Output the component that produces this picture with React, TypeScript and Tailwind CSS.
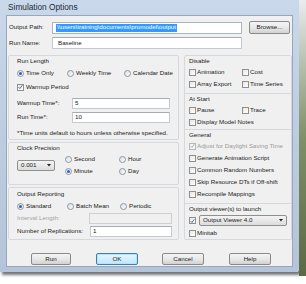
import React from 'react';

const Check = ({ checked, disabled }: { checked?: boolean; disabled?: boolean }) => (
  <span
    className={`w-[7px] h-[7px] shrink-0 border flex items-center justify-center ${
      disabled ? 'border-[#b8b8b8] bg-[#f4f4f4]' : 'border-[#8e8f8f] bg-gradient-to-br from-[#e6e6e6] to-[#ffffff]'
    }`}
  >
    {checked && (
      <svg width="6" height="6" viewBox="0 0 6 6">
        <path d="M0.8 3.2 L2.3 4.8 L5.2 0.9" fill="none" stroke={disabled ? '#a0a0a0' : '#3b5478'} strokeWidth="1" />
      </svg>
    )}
  </span>
);

const CheckItem = ({ label, checked, disabled, className = '' }: { label: string; checked?: boolean; disabled?: boolean; className?: string }) => (
  <div className={`flex items-center gap-[1px] ${className}`}>
    <Check checked={checked} disabled={disabled} />
    <span className={disabled ? 'text-[#9a9a9a]' : ''}>{label}</span>
  </div>
);

const Radio = ({ label, checked, className = '' }: { label: string; checked?: boolean; className?: string }) => (
  <div className={`flex items-center gap-[2px] ${className}`}>
    <span className="w-[7px] h-[7px] shrink-0 rounded-full border border-[#8c97a6] bg-gradient-to-br from-[#dcdfe3] to-[#fbfbfb] flex items-center justify-center">
      {checked && <span className="w-[3px] h-[3px] rounded-full bg-[#2b63b6]" />}
    </span>
    <span>{label}</span>
  </div>
);

const Input = ({ value, className = '', disabled }: { value?: string; className?: string; disabled?: boolean }) => (
  <div
    className={`h-[11px] border flex items-center px-[2px] ${
      disabled ? 'bg-[#f0f0f0] border-[#cfcfcf]' : 'bg-white border-[#c5c9d0] border-t-[#a7abb3]'
    } ${className}`}
  >
    {value}
  </div>
);

const Button = ({ label, focus, className = '' }: { label: string; focus?: boolean; className?: string }) => (
  <div
    className={`h-[12px] rounded-[2px] border flex items-center justify-center ${
      focus
        ? 'border-[#3c7fb1] bg-gradient-to-b from-[#eaf6fd] to-[#bee6fd] shadow-[inset_0_0_0_1px_#b7e2fb]'
        : 'border-[#8a8a8a] bg-gradient-to-b from-[#f4f4f4] via-[#e8e8e8] to-[#d2d2d2]'
    } ${className}`}
  >
    {label}
  </div>
);

const Dropdown = ({ value, className = '' }: { value: string; className?: string }) => (
  <div className={`border border-[#8e8f8f] rounded-[2px] bg-gradient-to-b from-[#f4f4f4] to-[#dcdcdc] flex items-center justify-between pl-[3px] pr-[3px] ${className}`}>
    <span>{value}</span>
    <svg width="4" height="3" viewBox="0 0 4 3">
      <path d="M0 0 H4 L2 2.5 Z" fill="#222" />
    </svg>
  </div>
);

export default function App() {
  return (
    <div className="w-[306px] h-[284px] overflow-hidden bg-white flex font-['Liberation_Sans',Arial,sans-serif] text-[6.2px] text-[#1a1a1a] leading-none">
      <div className="w-[299px] h-[272px] shrink-0 flex flex-col bg-gradient-to-b from-[#c9d8ea] via-[#bccde2] to-[#b4c5da] shadow-[2px_3px_3px_rgba(0,0,0,0.55)] rounded-br-[3px]">
        <div className="h-[15px] shrink-0 flex items-center pl-[8px] text-[8.3px] text-[#1e2a3a]">Simulation Options</div>
        <div className="flex-1 flex pl-[6px] pr-[6px] pb-[5px]">
          <div className="flex-1 bg-[#f0f0f0] border border-[#97a8bd] flex flex-col pl-[1px] pt-[5px]">
            {/* path rows */}
            <div className="flex items-center h-[13px]">
              <span className="w-[44px] pl-[1px]">Output Path:</span>
              <div className="w-[190px] h-[12px] bg-white border border-[#a9b4c4] flex items-center pl-[3px]">
                <span className="bg-[#3399ff] text-white px-[1px] h-[8px] flex items-center">\\users\training\documents\promodel\output</span>
              </div>
              <Button label="Browse..." className="w-[41px] h-[13px] ml-[7px]" />
            </div>
            <div className="flex items-center h-[12px] mt-[3px]">
              <span className="w-[44px] pl-[1px]">Run Name:</span>
              <div className="w-[190px] h-[12px] bg-white border border-[#c5c9d0] border-t-[#a7abb3] flex items-center pl-[5px]">Baseline</div>
            </div>

            <div className="flex mt-[6px]">
              {/* left column */}
              <div className="w-[171px] flex flex-col">
                <div className="h-[85px] border border-[#d5d9de] rounded-[2px] flex flex-col pl-[8px] pt-[1px]">
                  <div className="h-[9px] flex items-center">Run Length</div>
                  <div className="h-[10px] mt-[2px] grid grid-cols-[50px_57px_1fr] items-center">
                    <Radio label="Time Only" checked />
                    <Radio label="Weekly Time" />
                    <Radio label="Calendar Date" />
                  </div>
                  <CheckItem label="Warmup Period" checked className="h-[10px] mt-[4px] gap-[2px]" />
                  <div className="h-[10px] mt-[6px] flex items-center">
                    <span className="w-[55px]">Warmup Time*:</span>
                    <Input value="5" className="w-[98px] h-[10px]" />
                  </div>
                  <div className="h-[10px] mt-[4px] flex items-center">
                    <span className="w-[55px]">Run Time*:</span>
                    <Input value="10" className="w-[98px] h-[10px]" />
                  </div>
                  <div className="h-[10px] mt-[6px] flex items-center">*Time units default to hours unless otherwise specified.</div>
                </div>

                <div className="h-[43px] mt-[2px] border border-[#d5d9de] rounded-[2px] flex flex-col pl-[8px] pt-[1px]">
                  <div className="h-[9px] flex items-center">Clock Precision</div>
                  <div className="flex items-center mt-[0px]">
                    <Dropdown value="0.001" className="w-[38px] h-[11px]" />
                    <div className="ml-[10px] grid grid-cols-[54px_1fr] grid-rows-[12px_12px] items-center">
                      <Radio label="Second" />
                      <Radio label="Hour" />
                      <Radio label="Minute" checked />
                      <Radio label="Day" />
                    </div>
                  </div>
                </div>

                <div className="flex-1 mt-[2px] border border-[#d5d9de] rounded-[2px] flex flex-col pl-[8px] pt-[2px]">
                  <div className="h-[9px] flex items-center">Output Reporting</div>
                  <div className="h-[10px] mt-[2px] grid grid-cols-[50px_53px_1fr] items-center">
                    <Radio label="Standard" checked />
                    <Radio label="Batch Mean" />
                    <Radio label="Periodic" />
                  </div>
                  <div className="h-[11px] mt-[2px] flex items-center">
                    <span className="w-[72px] text-[#a3a3a3]">Interval Length:</span>
                    <Input disabled className="w-[83px] h-[11px]" />
                  </div>
                  <div className="h-[11px] mt-[2px] flex items-center">
                    <span className="w-[73px]">Number of Replications:</span>
                    <Input value="1" className="w-[82px] h-[11px]" />
                  </div>
                </div>
              </div>

              {/* right column */}
              <div className="w-[108px] ml-[5px] h-[185px] border border-[#d5d9de] rounded-[2px] flex flex-col">
                <div className="flex flex-col pl-[4px] h-[37px]">
                  <div className="h-[10px] flex items-center pt-[1px]">Disable</div>
                  <div className="h-[12px] grid grid-cols-[53px_1fr] items-center">
                    <CheckItem label="Animation" />
                    <CheckItem label="Cost" />
                  </div>
                  <div className="h-[12px] grid grid-cols-[53px_1fr] items-center">
                    <CheckItem label="Array Export" />
                    <CheckItem label="Time Series" />
                  </div>
                </div>
                <div className="flex flex-col pl-[4px] h-[37px] border-t border-[#d5d9de]">
                  <div className="h-[11px] flex items-center">At Start</div>
                  <div className="h-[12px] grid grid-cols-[53px_1fr] items-center">
                    <CheckItem label="Pause" />
                    <CheckItem label="Trace" />
                  </div>
                  <CheckItem label="Display Model Notes" className="h-[12px]" />
                </div>
                <div className="flex flex-col pl-[4px] h-[75px] border-t border-[#d5d9de]">
                  <div className="h-[10px] flex items-center">General</div>
                  <CheckItem label="Adjust for Daylight Saving Time" checked disabled className="h-[12px]" />
                  <CheckItem label="Generate Animation Script" className="h-[12px]" />
                  <CheckItem label="Common Random Numbers" className="h-[12px]" />
                  <CheckItem label="Skip Resource DTs if Off-shift" className="h-[12px]" />
                  <CheckItem label="Recompile Mappings" className="h-[12px]" />
                </div>
                <div className="flex-1 flex flex-col pl-[4px] border-t border-[#d5d9de]">
                  <div className="h-[9px] flex items-center pt-[1px]">Output viewer(s) to launch</div>
                  <div className="h-[13px] mt-[1px] flex items-center">
                    <Check checked />
                    <Dropdown value="Output Viewer 4.0" className="w-[88px] h-[11px] ml-[3px]" />
                  </div>
                  <CheckItem label="Minitab" className="h-[12px]" />
                </div>
              </div>
            </div>

            <div className="flex items-center mt-[13px] h-[12px]">
              <Button label="Run" className="w-[40px] ml-[23px]" />
              <Button label="OK" focus className="w-[42px] ml-[25px]" />
              <Button label="Cancel" className="w-[42px] ml-[24px]" />
              <Button label="Help" className="w-[42px] ml-[25px]" />
            </div>
          </div>
        </div>
      </div>
      <div className="w-[7px] h-[276px] bg-gradient-to-b from-[#e9ecee] via-[#7f8f66] to-[#5b6a44]" />
    </div>
  );
}
